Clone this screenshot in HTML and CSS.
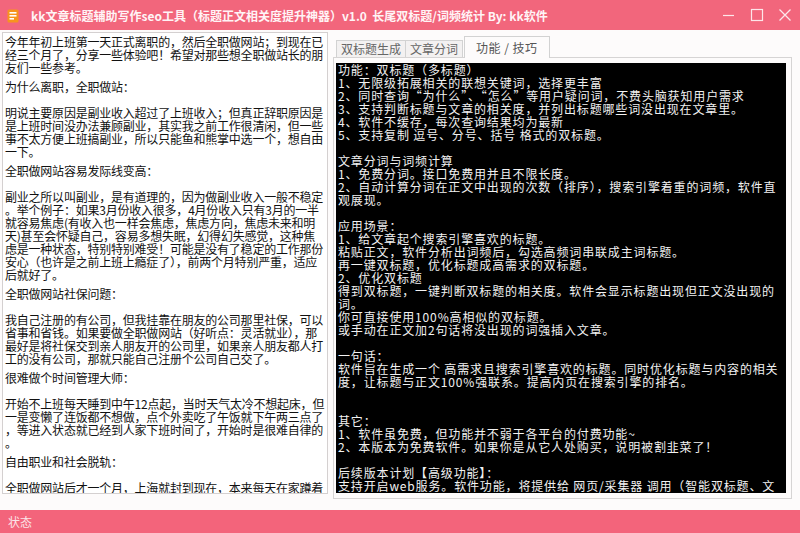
FILE: index.html
```html
<!DOCTYPE html>
<html lang="zh-CN">
<head>
<meta charset="utf-8">
<title>kk文章标题辅助写作seo工具</title>
<link rel="stylesheet" href="styles.css">
</head>
<body>
<div class="window">
  <div class="titlebar">
    <svg class="app-icon" width="12" height="14" viewBox="0 0 12 14">
      <rect x="0.5" y="0.5" width="11" height="13" rx="1.5" fill="#f7941d"/>
      <rect x="2.5" y="3" width="7" height="1.6" fill="#fff"/>
      <rect x="2.5" y="6" width="7" height="1.6" fill="#fff"/>
      <rect x="2.5" y="9" width="4.5" height="1.6" fill="#fff"/>
    </svg>
    <span class="title">kk文章标题辅助写作seo工具（标题正文相关度提升神器）v1.0&nbsp;&nbsp;长尾双标题/词频统计 By: kk软件</span>
    <div class="controls">
      <svg width="14" height="14" viewBox="0 0 14 14"><line x1="1" y1="7.5" x2="12" y2="7.5" stroke="#fde6ea" stroke-width="1.2"/></svg>
      <svg width="14" height="14" viewBox="0 0 14 14"><rect x="1.5" y="1.5" width="11" height="11" fill="none" stroke="#fde6ea" stroke-width="1.2"/></svg>
      <svg width="14" height="14" viewBox="0 0 14 14"><path d="M1.5 1.5 L12.5 12.5 M12.5 1.5 L1.5 12.5" stroke="#fde6ea" stroke-width="1.3"/></svg>
    </div>
  </div>

  <div class="main">
    <div class="article">
      <p class="para">今年年初上班第一天正式离职的，然后全职做网站；到现在已<br>经三个月了，分享一些体验吧！希望对那些想全职做站长的朋<br>友们一些参考。</p>
      <p class="head">为什么离职，全职做站：</p>
      <p class="para">明说主要原因是副业收入超过了上班收入；但真正辞职原因是<br>是上班时间没办法兼顾副业，其实我之前工作很清闲，但一些<br>事不太方便上班搞副业，所以只能鱼和熊掌中选一个，想自由<br>一下。</p>
      <p class="head">全职做网站容易发际线变高：</p>
      <p class="para">副业之所以叫副业，是有道理的，因为做副业收入一般不稳定<br>。举个例子：如果3月份收入很多，4月份收入只有3月的一半<br>就容易焦虑(有收入也一样会焦虑，焦虑方向，焦虑未来和明<br>天)甚至会怀疑自己，容易多想失眠，幻得幻失感觉，这种焦<br>虑是一种状态，特别特别难受！可能是没有了稳定的工作那份<br>安心（也许是之前上班上瘾症了），前两个月特别严重，适应<br>后就好了。</p>
      <p class="head">全职做网站社保问题：</p>
      <p class="para">我自己注册的有公司，但我挂靠在朋友的公司那里社保，可以<br>省事和省钱。如果要做全职做网站（好听点：灵活就业），那<br>最好是将社保交到亲人朋友开的公司里，如果亲人朋友都人打<br>工的没有公司，那就只能自己注册个公司自己交了。</p>
      <p class="head">很难做个时间管理大师：</p>
      <p class="para">开始不上班每天睡到中午12点起，当时天气太冷不想起床，但<br>一是变懒了连饭都不想做，点个外卖吃了午饭就下午两三点了<br>，等进入状态就已经到人家下班时间了，开始时是很难自律的<br>。</p>
      <p class="head">自由职业和社会脱轨：</p>
      <p class="para">全职做网站后才一个月，上海就封到现在，本来每天在家蹲着<br>，现在每天基本没社交，有了时间却没了整个社交。时间太短</p>
    </div>

    <div class="tabctrl">
      <div class="tabs">
        <span class="tab">双标题生成</span>
        <span class="tab">文章分词</span>
        <span class="tab active">功能 / 技巧</span>
      </div>
      <div class="pane">
        <div class="console">功能：双标题（多标题）
1、无限级拓展相关的联想关键词，选择更丰富
2、同时查询“为什么”、“怎么”等用户疑问词，不费头脑获知用户需求
3、支持判断标题与文章的相关度，并列出标题哪些词没出现在文章里。
4、软件不缓存，每次查询结果均为最新
5、支持复制 逗号、分号、括号 格式的双标题。

文章分词与词频计算
1、免费分词。接口免费用并且不限长度。
2、自动计算分词在正文中出现的次数（排序），搜索引擎着重的词频，软件直
观展现。

应用场景：
1、给文章起个搜索引擎喜欢的标题。
粘贴正文，软件分析出词频后，勾选高频词串联成主词标题。
再一键双标题，优化标题成高需求的双标题。
2、优化双标题
得到双标题，一键判断双标题的相关度。软件会显示标题出现但正文没出现的
词。
你可直接使用100%高相似的双标题。
或手动在正文加2句话将没出现的词强插入文章。

一句话：
软件旨在生成一个 高需求且搜索引擎喜欢的标题。同时优化标题与内容的相关
度，让标题与正文100%强联系。提高内页在搜索引擎的排名。


其它：
1、软件虽免费，但功能并不弱于各平台的付费功能~
2、本版本为免费软件。如果你是从它人处购买，说明被割韭菜了！

后续版本计划【高级功能】：
支持开启web服务。软件功能，将提供给 网页/采集器 调用（智能双标题、文</div>
      </div>
    </div>
  </div>

  <div class="statusbar">状态</div>
</div>
</body>
</html>
```

FILE: styles.css
```css
html, body {
  margin: 0;
  padding: 0;
  background: #fdfbfb;
}

.window {
  width: 800px;
  height: 533px;
  display: flex;
  flex-direction: column;
  overflow: hidden;
  font-family: "Noto Sans CJK SC", "Noto Sans", sans-serif;
  background: #fdfbfb;
}

.titlebar {
  height: 30px;
  flex: 0 0 30px;
  background: #f2667c;
  display: flex;
  align-items: center;
  color: #fff;
}

.app-icon {
  margin-left: 7px;
  margin-top: 1px;
}

.title {
  margin-left: 12px;
  font-size: 12px;
  font-weight: bold;
  white-space: nowrap;
  color: #fff4f6;
}

.controls {
  margin-left: auto;
  display: flex;
  align-items: center;
  gap: 14px;
  margin-right: 8px;
}

.main {
  flex: 0 0 480px;
  height: 480px;
  display: flex;
  align-items: flex-start;
  padding-left: 2px;
}

.article {
  margin-top: 2px;
  border: 1px solid #d4d0d0;
  background: #ffffff;
  padding: 2px 0 0 2px;
  box-sizing: border-box;
  width: 326px;
  height: 462px;
  overflow: hidden;
  font-size: 12px;
  letter-spacing: -0.22px;
  line-height: 13px;
  color: #111;
}

.article p {
  margin: 0;
  white-space: nowrap;
}

.article .para {
  margin-bottom: 6px;
}

.article .head {
  margin-bottom: 13px;
}

.tabctrl {
  margin-left: 5px;
  margin-top: 6px;
  width: 459px;
  height: 463px;
  display: flex;
  flex-direction: column;
}

.tabs {
  height: 21px;
  flex: 0 0 21px;
  display: flex;
  align-items: flex-end;
  padding-left: 3px;
  position: relative;
  z-index: 1;
}

.tab {
  height: 17px;
  box-sizing: border-box;
  border: 1px solid #d2d2d2;
  border-bottom: none;
  background: #f3f1f1;
  color: #666;
  font-size: 12px;
  line-height: 16px;
  padding: 0 4px;
  white-space: nowrap;
}

.tab + .tab {
  margin-left: -1px;
}

.tab.active {
  height: 22px;
  margin-bottom: -1px;
  margin-left: 1px;
  background: #fdfbfb;
  color: #555;
  line-height: 21px;
  padding: 0 11px;
  letter-spacing: 0.5px;
}

.pane {
  flex: 1;
  border: 1px solid #d6d4d4;
  padding: 5px 5px 5px 2px;
  box-sizing: border-box;
  display: flex;
}

.console {
  flex: 1;
  background: #000;
  color: #f2f2f2;
  font-size: 12px;
  letter-spacing: 0.85px;
  line-height: 13px;
  white-space: pre;
  overflow: hidden;
  padding: 0 2px;
}

.statusbar {
  margin-top: auto;
  height: 23px;
  flex: 0 0 23px;
  background: #f3647b;
  color: #fbe3e7;
  font-size: 12px;
  line-height: 23px;
  padding-left: 8px;
}
```
